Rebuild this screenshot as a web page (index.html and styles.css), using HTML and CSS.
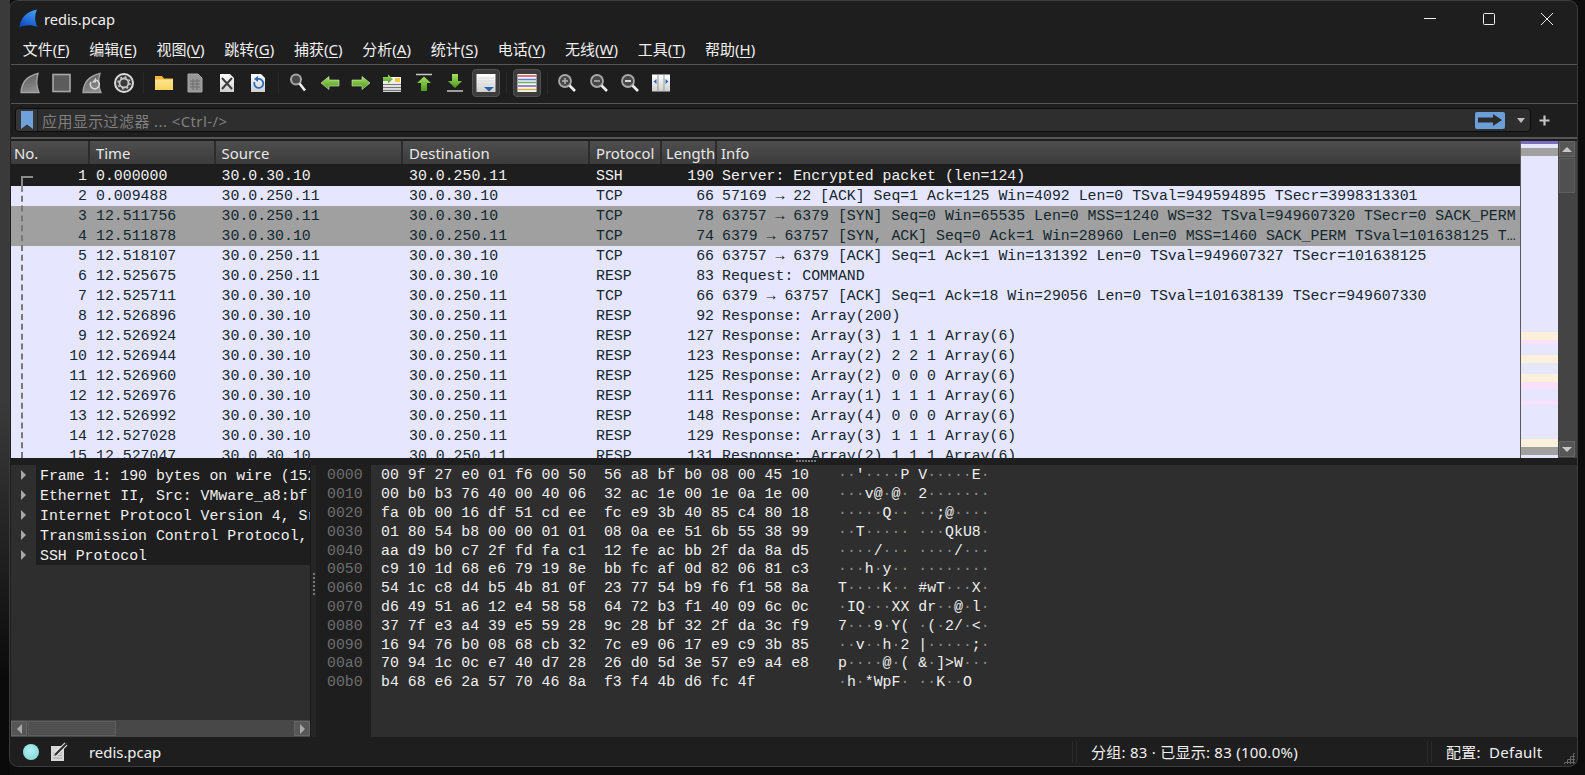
FILE: index.html
```html
<!DOCTYPE html>
<html lang="zh">
<head>
<meta charset="utf-8">
<title>redis.pcap</title>
<link rel="stylesheet" href="styles.css">
</head>
<body>
<svg class="defs" width="0" height="0" aria-hidden="true">
  <defs>
    <linearGradient id="fin" x1="0" y1="0" x2="0.3" y2="1"><stop offset="0" stop-color="#5a5a5a"/><stop offset="1" stop-color="#8a8a8a"/></linearGradient>
    <linearGradient id="blue" x1="0.7" y1="0" x2="0.2" y2="1"><stop offset="0" stop-color="#3f9df2"/><stop offset="1" stop-color="#0c46c6"/></linearGradient>
    <linearGradient id="green" x1="0" y1="0" x2="0" y2="1"><stop offset="0" stop-color="#a3e060"/><stop offset="1" stop-color="#4e9a1c"/></linearGradient>
    <linearGradient id="page" x1="0" y1="0" x2="0" y2="1"><stop offset="0" stop-color="#fff"/><stop offset="1" stop-color="#cfcfcf"/></linearGradient>
    <linearGradient id="folder" x1="0" y1="0" x2="0" y2="1"><stop offset="0" stop-color="#ffe48e"/><stop offset="1" stop-color="#fbd25c"/></linearGradient>
  </defs>
</svg>
<div class="window">
  <header class="titlebar">
    <svg class="logo" width="19" height="19" viewBox="0 0 19 19"><path d="M0.500 18.500C1 10 7 2.500 18 0.500C15.500 6 15.500 12.500 18.500 18C12 15.500 6 16 0.500 18.500Z" fill="url(#blue)"/></svg>
    <span class="title">redis.pcap</span>
    <div class="winctl">
      <svg width="58" height="34" viewBox="0 0 58 34"><path d="M23 17.500H35" stroke="#eee" fill="none"/></svg>
      <svg width="58" height="34" viewBox="0 0 58 34"><rect x="23.500" y="12.500" width="11" height="11" rx="1" stroke="#eee" fill="none"/></svg>
      <svg width="58" height="34" viewBox="0 0 58 34"><path d="M23 12L35 24M35 12L23 24" stroke="#eee" fill="none"/></svg>
    </div>
  </header>

  <nav class="menubar">
    <span class="menu">文件(<u>F</u>)</span>
    <span class="menu">编辑(<u>E</u>)</span>
    <span class="menu">视图(<u>V</u>)</span>
    <span class="menu">跳转(<u>G</u>)</span>
    <span class="menu">捕获(<u>C</u>)</span>
    <span class="menu">分析(<u>A</u>)</span>
    <span class="menu">统计(<u>S</u>)</span>
    <span class="menu">电话(<u>Y</u>)</span>
    <span class="menu">无线(<u>W</u>)</span>
    <span class="menu">工具(<u>T</u>)</span>
    <span class="menu">帮助(<u>H</u>)</span>
  </nav>

  <div class="toolbar">
    <span class="tool"><svg width="22" height="22" viewBox="0 0 22 22"><path d="M2 20.500C2.500 11 8 4 19 1.500C17 8 17.200 14 20 20.500Z" fill="url(#fin)" stroke="#a5a5a5" stroke-width="1.300"/></svg></span>
    <span class="tool"><svg width="22" height="22" viewBox="0 0 22 22"><rect x="3" y="2.500" width="17" height="17" fill="#5c5c5c" stroke="#a8a8a8" stroke-width="1.600"/></svg></span>
    <span class="tool"><svg width="22" height="22" viewBox="0 0 22 22"><path d="M2 20.500C2.500 11 8 4 19 1.500C17 8 17.200 14 20 20.500Z" fill="url(#fin)" stroke="#a5a5a5" stroke-width="1.300"/><path d="M10 10A4.500 4.500 0 1 0 15 8" fill="none" stroke="#d5d5d5" stroke-width="1.600"/><path d="M15 5.500V10.500H11Z" fill="#d5d5d5"/></svg></span>
    <span class="tool"><svg width="22" height="22" viewBox="0 0 22 22"><circle cx="11" cy="11" r="9" fill="#3a3a3a" stroke="#dcdcdc" stroke-width="2"/><circle cx="11" cy="11" r="4.500" fill="#3a3a3a" stroke="#c8c8c8" stroke-width="1.800"/><circle cx="11" cy="11" r="6" fill="none" stroke="#c8c8c8" stroke-width="1.500" stroke-dasharray="2 2.700"/></svg></span>
    <i class="sep"></i>
    <span class="tool"><svg width="20" height="20" viewBox="0 0 20 20"><path d="M1 3H8L10 5.500H19V17H1Z" fill="#f3b53a"/><rect x="1" y="6.500" width="18" height="10.500" fill="url(#folder)"/></svg></span>
    <span class="tool"><svg width="20" height="20" viewBox="0 0 20 20"><path d="M3 1H13L17 5V19H3Z" fill="#969696" stroke="#a8a8a8"/><path d="M5 8H15M5 11H15M5 14H15M8 6V17M12 6V17" stroke="#6e6e6e"/></svg></span>
    <span class="tool"><svg width="20" height="20" viewBox="0 0 20 20"><path d="M3 1H13L17 5V19H3Z" fill="url(#page)"/><path d="M5 5L15 16M15 5L5 16" stroke="#3c3c3c" stroke-width="2"/></svg></span>
    <span class="tool"><svg width="20" height="20" viewBox="0 0 20 20"><path d="M3 1H13L17 5V19H3Z" fill="url(#page)"/><path d="M6.500 9A4.500 4.500 0 1 0 10 6" fill="none" stroke="#2f6bb8" stroke-width="1.800"/><path d="M10 3V9L6 6Z" fill="#2f6bb8"/></svg></span>
    <i class="sep"></i>
    <span class="tool"><svg width="20" height="20" viewBox="0 0 20 20"><circle cx="8" cy="6.500" r="5" fill="#484848" stroke="#a8a8a8" stroke-width="2"/><path d="M11.500 10.500L17 17.500" stroke="#eee" stroke-width="2.600"/></svg></span>
    <span class="tool"><svg width="20" height="20" viewBox="0 0 20 20"><path d="M1 10L9 3.500V7H19V13H9V16.500Z" fill="url(#green)" stroke="#d9e8c8" stroke-width="0.600"/></svg></span>
    <span class="tool"><svg width="20" height="20" viewBox="0 0 20 20"><path d="M19 10L11 3.500V7H1V13H11V16.500Z" fill="url(#green)" stroke="#d9e8c8" stroke-width="0.600"/></svg></span>
    <span class="tool"><svg width="20" height="20" viewBox="0 0 20 20"><rect x="1" y="4" width="18" height="15" fill="url(#page)"/><path d="M1 11.500H19M1 14.500H19M1 17.500H19" stroke="#777"/><rect x="13" y="5" width="5" height="4" fill="#f0c94a"/><path d="M11 6L6 1.500V4H1V8H6V10.500Z" fill="url(#green)"/></svg></span>
    <span class="tool"><svg width="20" height="20" viewBox="0 0 20 20"><path d="M2 1.500H18" stroke="#c8c8c8" stroke-width="1.600"/><path d="M10 3.500L17 10H13V18H7V10H3Z" fill="url(#green)"/></svg></span>
    <span class="tool"><svg width="20" height="20" viewBox="0 0 20 20"><path d="M7 1H13V8H17L10 15L3 8H7Z" fill="url(#green)"/><path d="M2 18H18" stroke="#c8c8c8" stroke-width="1.600"/></svg></span>
    <span class="tool"><span class="toggled"><svg width="20" height="20" viewBox="0 0 20 20"><rect x="0.500" y="1" width="19" height="18" fill="url(#page)"/><path d="M2 5H18M2 8H18M2 11H18" stroke="#dadada"/><path d="M8 14H18L13 18.500Z" fill="#2a62aa"/></svg></span></span>
    <i class="sep"></i>
    <span class="tool"><span class="toggled"><svg width="20" height="20" viewBox="0 0 20 20"><rect x="0.500" y="1" width="19" height="18" fill="#f4f4f4"/><path d="M1 3H19" stroke="#d84a4a" stroke-width="1.300"/><path d="M1 6.500H19" stroke="#5a7fd0" stroke-width="1.300"/><path d="M1 9.500H19" stroke="#63b563" stroke-width="1.300"/><path d="M1 13H19" stroke="#7a5fb8" stroke-width="1.300"/><path d="M1 16.500H19" stroke="#d8b63a" stroke-width="1.300"/></svg></span></span>
    <i class="sep"></i>
    <span class="tool"><svg width="20" height="20" viewBox="0 0 20 20"><circle cx="8" cy="8" r="6" fill="#484848" stroke="#a8a8a8" stroke-width="1.800"/><path d="M5 8H11M8 5V11" stroke="#b5b5b5" stroke-width="1.500"/><path d="M12.500 12.500L18 18" stroke="#eee" stroke-width="2.600"/></svg></span>
    <span class="tool"><svg width="20" height="20" viewBox="0 0 20 20"><circle cx="8" cy="8" r="6" fill="#484848" stroke="#a8a8a8" stroke-width="1.800"/><path d="M5 8H11" stroke="#b5b5b5" stroke-width="1.500"/><path d="M12.500 12.500L18 18" stroke="#eee" stroke-width="2.600"/></svg></span>
    <span class="tool"><svg width="20" height="20" viewBox="0 0 20 20"><circle cx="8" cy="8" r="6" fill="#484848" stroke="#a8a8a8" stroke-width="1.800"/><path d="M5 8H11" stroke="#d5d5d5" stroke-width="2.200"/><path d="M12.500 12.500L18 18" stroke="#eee" stroke-width="2.600"/></svg></span>
    <span class="tool"><svg width="20" height="20" viewBox="0 0 20 20"><rect x="1" y="1.500" width="18" height="17" fill="url(#page)"/><path d="M7 1.500V18.500M13 1.500V18.500" stroke="#999"/><path d="M5.500 6V11L2.500 8.500ZM14.500 6V11L17.500 8.500Z" fill="#2f6bb8"/></svg></span>
  </div>

  <div class="filterbar">
    <div class="filterbox">
      <span class="bookmark"><svg width="12" height="18" viewBox="0 0 12 18"><path d="M0 0H12V18L6 13.500L0 18Z" fill="#6fa2dc"/></svg></span>
      <span class="placeholder">应用显示过滤器 ... &lt;Ctrl-/&gt;</span>
      <span class="apply"><svg width="24" height="12" viewBox="0 0 24 12"><path d="M0 3.500H15V0L24 6L15 12V8.500H0Z" fill="#2c2c2c"/></svg></span>
      <span class="dropdown"></span>
    </div>
    <span class="plus"><svg width="11" height="11" viewBox="0 0 11 11"><path d="M5.500 0.500V10.500M0.500 5.500H10.500" stroke="#c4c4c4" stroke-width="2.200"/></svg></span>
  </div>

  <section class="packets">
    <div class="list">
      <div class="head">
        <span class="hc c-no">No.</span>
        <span class="hc c-time">Time</span>
        <span class="hc c-src">Source</span>
        <span class="hc c-dst">Destination</span>
        <span class="hc c-proto">Protocol</span>
        <span class="hc c-len">Length</span>
        <span class="hc c-info">Info</span>
      </div>
      <div class="rows">
        <i class="conv"></i>
        <div class="row sel"><span class="c-no">1</span><span class="c-time">0.000000</span><span class="c-src">30.0.30.10</span><span class="c-dst">30.0.250.11</span><span class="c-proto">SSH</span><span class="c-len">190</span><span class="c-info">Server: Encrypted packet (len=124)</span></div>
        <div class="row"><span class="c-no">2</span><span class="c-time">0.009488</span><span class="c-src">30.0.250.11</span><span class="c-dst">30.0.30.10</span><span class="c-proto">TCP</span><span class="c-len">66</span><span class="c-info">57169 → 22 [ACK] Seq=1 Ack=125 Win=4092 Len=0 TSval=949594895 TSecr=3998313301</span></div>
        <div class="row syn"><span class="c-no">3</span><span class="c-time">12.511756</span><span class="c-src">30.0.250.11</span><span class="c-dst">30.0.30.10</span><span class="c-proto">TCP</span><span class="c-len">78</span><span class="c-info">63757 → 6379 [SYN] Seq=0 Win=65535 Len=0 MSS=1240 WS=32 TSval=949607320 TSecr=0 SACK_PERM</span></div>
        <div class="row syn"><span class="c-no">4</span><span class="c-time">12.511878</span><span class="c-src">30.0.30.10</span><span class="c-dst">30.0.250.11</span><span class="c-proto">TCP</span><span class="c-len">74</span><span class="c-info">6379 → 63757 [SYN, ACK] Seq=0 Ack=1 Win=28960 Len=0 MSS=1460 SACK_PERM TSval=101638125 T…</span></div>
        <div class="row"><span class="c-no">5</span><span class="c-time">12.518107</span><span class="c-src">30.0.250.11</span><span class="c-dst">30.0.30.10</span><span class="c-proto">TCP</span><span class="c-len">66</span><span class="c-info">63757 → 6379 [ACK] Seq=1 Ack=1 Win=131392 Len=0 TSval=949607327 TSecr=101638125</span></div>
        <div class="row"><span class="c-no">6</span><span class="c-time">12.525675</span><span class="c-src">30.0.250.11</span><span class="c-dst">30.0.30.10</span><span class="c-proto">RESP</span><span class="c-len">83</span><span class="c-info">Request: COMMAND</span></div>
        <div class="row"><span class="c-no">7</span><span class="c-time">12.525711</span><span class="c-src">30.0.30.10</span><span class="c-dst">30.0.250.11</span><span class="c-proto">TCP</span><span class="c-len">66</span><span class="c-info">6379 → 63757 [ACK] Seq=1 Ack=18 Win=29056 Len=0 TSval=101638139 TSecr=949607330</span></div>
        <div class="row"><span class="c-no">8</span><span class="c-time">12.526896</span><span class="c-src">30.0.30.10</span><span class="c-dst">30.0.250.11</span><span class="c-proto">RESP</span><span class="c-len">92</span><span class="c-info">Response: Array(200)</span></div>
        <div class="row"><span class="c-no">9</span><span class="c-time">12.526924</span><span class="c-src">30.0.30.10</span><span class="c-dst">30.0.250.11</span><span class="c-proto">RESP</span><span class="c-len">127</span><span class="c-info">Response: Array(3) 1 1 1 Array(6)</span></div>
        <div class="row"><span class="c-no">10</span><span class="c-time">12.526944</span><span class="c-src">30.0.30.10</span><span class="c-dst">30.0.250.11</span><span class="c-proto">RESP</span><span class="c-len">123</span><span class="c-info">Response: Array(2) 2 2 1 Array(6)</span></div>
        <div class="row"><span class="c-no">11</span><span class="c-time">12.526960</span><span class="c-src">30.0.30.10</span><span class="c-dst">30.0.250.11</span><span class="c-proto">RESP</span><span class="c-len">125</span><span class="c-info">Response: Array(2) 0 0 0 Array(6)</span></div>
        <div class="row"><span class="c-no">12</span><span class="c-time">12.526976</span><span class="c-src">30.0.30.10</span><span class="c-dst">30.0.250.11</span><span class="c-proto">RESP</span><span class="c-len">111</span><span class="c-info">Response: Array(1) 1 1 1 Array(6)</span></div>
        <div class="row"><span class="c-no">13</span><span class="c-time">12.526992</span><span class="c-src">30.0.30.10</span><span class="c-dst">30.0.250.11</span><span class="c-proto">RESP</span><span class="c-len">148</span><span class="c-info">Response: Array(4) 0 0 0 Array(6)</span></div>
        <div class="row"><span class="c-no">14</span><span class="c-time">12.527028</span><span class="c-src">30.0.30.10</span><span class="c-dst">30.0.250.11</span><span class="c-proto">RESP</span><span class="c-len">129</span><span class="c-info">Response: Array(3) 1 1 1 Array(6)</span></div>
        <div class="row"><span class="c-no">15</span><span class="c-time">12.527047</span><span class="c-src">30.0.30.10</span><span class="c-dst">30.0.250.11</span><span class="c-proto">RESP</span><span class="c-len">131</span><span class="c-info">Response: Array(2) 1 1 1 Array(6)</span></div>
      </div>
    </div>
    <div class="minimap"></div>
    <div class="vscroll">
      <span class="sbtn"><i class="tri-up"></i></span>
      <span class="vthumb"></span>
      <span class="vtrack"></span>
      <span class="sbtn"><i class="tri-down"></i></span>
    </div>
  </section>

  <div class="hsplit"><i class="grip-h"></i></div>

  <section class="panes">
    <div class="tree">
      <div class="tree-rows">
        <div class="tr"><span class="arrow"><i class="tri-right"></i></span><span class="tt">Frame 1: 190 bytes on wire (152</span></div>
        <div class="tr"><span class="arrow"><i class="tri-right"></i></span><span class="tt">Ethernet II, Src: VMware_a8:bf:</span></div>
        <div class="tr"><span class="arrow"><i class="tri-right"></i></span><span class="tt">Internet Protocol Version 4, Src</span></div>
        <div class="tr"><span class="arrow"><i class="tri-right"></i></span><span class="tt">Transmission Control Protocol, S</span></div>
        <div class="tr"><span class="arrow"><i class="tri-right"></i></span><span class="tt">SSH Protocol</span></div>
      </div>
      <div class="hscroll">
        <span class="sbtn-h"><i class="tri-left"></i></span>
        <span class="hthumb"></span>
        <span class="htrack"></span>
        <span class="sbtn-h"><i class="tri-right"></i></span>
      </div>
    </div>
    <div class="vsplit"><i class="grip-v"></i></div>
    <pre class="offsets">0000
0010
0020
0030
0040
0050
0060
0070
0080
0090
00a0
00b0</pre>
    <pre class="hex">00 9f 27 e0 01 f6 00 50  56 a8 bf b0 08 00 45 10
00 b0 b3 76 40 00 40 06  32 ac 1e 00 1e 0a 1e 00
fa 0b 00 16 df 51 cd ee  fc e9 3b 40 85 c4 80 18
01 80 54 b8 00 00 01 01  08 0a ee 51 6b 55 38 99
aa d9 b0 c7 2f fd fa c1  12 fe ac bb 2f da 8a d5
c9 10 1d 68 e6 79 19 8e  bb fc af 0d 82 06 81 c3
54 1c c8 d4 b5 4b 81 0f  23 77 54 b9 f6 f1 58 8a
d6 49 51 a6 12 e4 58 58  64 72 b3 f1 40 09 6c 0c
37 7f e3 a4 39 e5 59 28  9c 28 bf 32 2f da 3c f9
16 94 76 b0 08 68 cb 32  7c e9 06 17 e9 c9 3b 85
70 94 1c 0c e7 40 d7 28  26 d0 5d 3e 57 e9 a4 e8
b4 68 e6 2a 57 70 46 8a  f3 f4 4b d6 fc 4f</pre>
    <pre class="ascii"><b>··</b>'<b>····</b>P V<b>·····</b>E<b>·</b>
<b>···</b>v@<b>·</b>@<b>·</b> 2<b>·······</b>
<b>·····</b>Q<b>··</b> <b>··</b>;@<b>····</b>
<b>··</b>T<b>·····</b> <b>···</b>QkU8<b>·</b>
<b>····</b>/<b>···</b> <b>····</b>/<b>···</b>
<b>···</b>h<b>·</b>y<b>··</b> <b>········</b>
T<b>····</b>K<b>··</b> #wT<b>···</b>X<b>·</b>
<b>·</b>IQ<b>···</b>XX dr<b>··</b>@<b>·</b>l<b>·</b>
7<b>···</b>9<b>·</b>Y( <b>·</b>(<b>·</b>2/<b>·</b>&lt;<b>·</b>
<b>··</b>v<b>··</b>h<b>·</b>2 |<b>·····</b>;<b>·</b>
p<b>····</b>@<b>·</b>( &amp;<b>·</b>]&gt;W<b>···</b>
<b>·</b>h<b>·</b>*WpF<b>·</b> <b>··</b>K<b>··</b>O</pre>
  </section>

  <footer class="status">
    <span class="led"></span>
    <svg class="note" width="19" height="19" viewBox="0 0 19 19"><path d="M1 4H14V19H1Z" fill="#d8d8d8"/><path d="M3 11H12M3 13.500H12M3 16H12" stroke="#a5a5a5"/><path d="M5 13L16 2" stroke="#f4f4f4" stroke-width="4"/><path d="M5 13L17 1" stroke="#333" stroke-width="2.400"/></svg>
    <span class="file">redis.pcap</span>
    <span class="spring"></span>
    <i class="ssep"></i>
    <span class="counts">分组: 83 · 已显示: 83 (100.0%)</span>
    <i class="ssep"></i>
    <span class="profile">配置:&nbsp; Default</span>
    <span class="sizegrip"></span>
  </footer>
</div>
</body>
</html>
```
FILE: styles.css
```css
* { box-sizing: border-box; }
html, body { margin: 0; height: 100%; overflow: hidden; }
body {
  padding: 1px 8px 9px 10px;
  background: linear-gradient(#3a3a3a, #3a3a3a 400px, #0a0a0a 680px) left top / 10px 100% no-repeat, #0d0d0d;
  font-family: "Noto Sans", "Noto Sans CJK SC", sans-serif;
  font-size: 14.9px;
  color: #f0f0f0;
}
.defs { position: absolute; }
.window {
  width: 1567px;
  height: 765px;
  display: flex;
  flex-direction: column;
  padding-left: 1px;
  background: #1e1e1e;
  border-radius: 8px;
  box-shadow: 0 0 0 1px #3c3c3c;
  overflow: hidden;
}

/* title */
.titlebar { height: 34px; flex: none; display: flex; align-items: center; padding: 2px 0 0 8px; }
.logo { margin: -2px 6px 0 0; }
.title { font-size: 14.67px; }
.winctl { margin: -2px 0 0 auto; display: flex; padding-right: 1px; gap: 0.5px; }

/* menu */
.menubar { height: 30px; flex: none; display: flex; align-items: center; padding: 0 0 2px 1.8px; border-bottom: 1px solid #555; }
.menu { padding: 0 9.9px; white-space: nowrap; font-size: 15px; }
.menu u { text-underline-offset: 2px; }

/* toolbar */
.toolbar { height: 39px; flex: none; display: flex; align-items: center; padding: 0 0 2px 3px; border-bottom: 1px solid #555; }
.tool { width: 31.35px; height: 28px; flex: none; display: flex; align-items: center; justify-content: center; }
.toggled { width: 28px; height: 28px; display: flex; align-items: center; justify-content: center; background: #3c3c3c; border: 1px solid #505050; border-radius: 4px; }
.sep { width: 1px; margin: 0 4px; height: 22px; background: #282828; flex: none; }

/* filter */
.filterbar { height: 35px; flex: none; display: flex; align-items: flex-start; padding: 4px 0 0 4px; border-bottom: 2px solid #555; }
.filterbox { width: 1516px; height: 24px; display: flex; align-items: center; background: #2e2e2e; border: 1px solid #0c0c0c; border-radius: 4px; }
.bookmark { width: 22px; height: 100%; flex: none; display: flex; align-items: center; justify-content: center; background: #363636; border-right: 1px solid #1a1a1a; border-radius: 3px 0 0 3px; }
.placeholder { margin-left: 4px; color: #7f7f7f; white-space: nowrap; font-size: 15px; letter-spacing: 0.4px; }
.apply { margin-left: auto; width: 30px; height: 17px; flex: none; display: flex; align-items: center; justify-content: center; background: #6b9fd8; border-radius: 2px; }
.dropdown { width: 0; height: 0; margin: 0 5px 0 12px; border-style: solid; border-width: 5px 4px 0; border-color: #bdbdbd transparent transparent; flex: none; }
.plus { margin: 7px 0 0 8px; display: flex; }

/* packets */
.packets { height: 317px; margin-top: 2px; flex: none; display: flex; }
.list { width: 1510px; flex: none; display: flex; flex-direction: column; border-right: 1px solid #5a5a5a; min-height: 0; overflow: hidden; }
.head { height: 23px; flex: none; margin-bottom: 2px; display: flex; background: linear-gradient(#4e4e4e, #3c3c3c); color: #e8e8e8; line-height: 24px; }
.hc { border-right: 2px solid #2c2c2c; white-space: nowrap; overflow: hidden; }
.head .c-no { text-align: left; padding: 0 0 0 3px; }
.head .c-len { text-align: left; padding: 0 0 0 4px; }
.head .c-info { border-right: 0; padding-left: 4px; }
.rows { position: relative; flex: 1; min-height: 0; background: #e7e6ff; overflow: hidden; }
.row {
  height: 20px;
  display: flex;
  background: #e7e6ff;
  color: #12272e;
  font-family: "Liberation Mono", monospace;
  font-size: 14.87px;
  line-height: 20px;
  white-space: pre;
}
.row.sel { background: #1e1e1e; color: #f2f2f2; }
.row.syn { background: #a0a0a0; }
.c-no { width: 79px; flex: none; text-align: right; padding-right: 3px; }
.c-time { width: 126px; flex: none; padding-left: 6px; }
.c-src { width: 187px; flex: none; padding-left: 5.6px; }
.c-dst { width: 187px; flex: none; padding-left: 6px; }
.c-proto { width: 72px; flex: none; padding-left: 6px; }
.c-len { width: 55px; flex: none; text-align: right; padding-right: 3px; }
.c-info { flex: 1; min-width: 0; padding-left: 5px; overflow: hidden; }
.conv { position: absolute; left: 10px; top: 10px; bottom: 0; width: 10px; border-left: 2px dashed #777; z-index: 1; }
.conv::before { content: ""; position: absolute; left: -2px; top: 0; width: 10px; height: 12px; border-left: 2px solid #8a8a8a; border-top: 2px solid #8a8a8a; }
.minimap {
  width: 37px;
  flex: none;
  background: linear-gradient(#7a6cc0 0 3px, #e7e6ff 3px 7px, #a0a0a0 7px 15px, #e7e6ff 15px 191px, #faf0dc 191px 199px, #fbe0fb 199px 203px, #e7e6ff 203px 214px, #faf0dc 214px 222px, #e7e6ff 222px 233px, #faf0dc 233px 241px, #fbe0fb 241px 248px, #e7e6ff 248px 260px, #fbe0fb 260px 264px, #e7e6ff 264px 298px, #faf0dc 298px 306px, #a0a0a0 306px 314px, #e7e6ff 314px);
}
.vscroll { width: 19px; flex: none; display: flex; flex-direction: column; padding: 0 2px 1px 1px; background: #444; }
.sbtn { height: 16px; flex: none; display: flex; align-items: center; justify-content: center; background: #565656; border: 1px solid #666; }
.vthumb { height: 35px; margin-top: 1px; flex: none; background: #505050; border: 1px solid #5e5e5e; }
.vtrack { flex: 1; }
.tri-up, .tri-down, .tri-left, .tri-right { display: block; width: 0; height: 0; border-style: solid; }
.tri-up { border-width: 0 5px 5px; border-color: transparent transparent #c8c8c8; }
.tri-down { border-width: 5px 5px 0; border-color: #c8c8c8 transparent transparent; }
.tri-right { border-width: 5px 0 5px 5px; border-color: transparent transparent transparent #a8a8a8; }
.tri-left { border-width: 5px 5px 5px 0; border-color: transparent #a8a8a8 transparent transparent; }

.hsplit { height: 7px; flex: none; display: flex; justify-content: center; background: #1e1e1e; padding-top: 2px; }
.grip-h { width: 21px; height: 2px; margin-left: 24px; background: repeating-linear-gradient(90deg, #777 0 2px, transparent 2px 3px); }

/* panes */
.panes { height: 272px; flex: none; display: flex; background: #2e2e2e; }
.tree { width: 299px; flex: none; display: flex; flex-direction: column; overflow: hidden; }
.tree-rows { flex: 1; min-height: 0; }
.tr { height: 20px; display: flex; font-family: "Liberation Mono", monospace; font-size: 14.87px; line-height: 20px; white-space: pre; }
.arrow { width: 25px; flex: none; display: flex; align-items: center; justify-content: center; }
.tt { flex: 1; min-width: 0; padding: 1px 0 0 4px; background: #1e1e1e; overflow: hidden; color: #f0f0f0; }
.hscroll { height: 17px; flex: none; display: flex; background: #484848; padding: 1px 0; }
.sbtn-h { width: 16px; flex: none; display: flex; align-items: center; justify-content: center; background: #565656; border: 1px solid #666; }
.hthumb { width: 88px; margin-left: 1px; flex: none; background: #505050; border: 1px solid #5e5e5e; }
.htrack { flex: 1; }
.vsplit { width: 6px; flex: none; display: flex; align-items: center; justify-content: flex-end; background: #252525; border-left: 1px solid #1a1a1a; }
.grip-v { width: 2px; height: 24px; margin: 0 1px 0 0; transform: translateY(-16px); background: repeating-linear-gradient(#777 0 2px, transparent 2px 4px); }
pre { margin: 0; font-family: "Liberation Mono", monospace; font-size: 14.87px; line-height: 18.8px; padding-top: 1.4px; }
.offsets { width: 55px; flex: none; padding-left: 11px; background: #1e1e1e; color: #6e6e6e; }
.hex { width: 467px; flex: none; padding-left: 10px; color: #f0f0f0; }
.ascii { flex: 1; color: #f0f0f0; }
.ascii b { font-weight: 400; color: #8a8a8a; }

/* status */
.status { height: 29px; flex: none; display: flex; align-items: center; padding-left: 12px; position: relative; }
.led { width: 16px; height: 16px; flex: none; border-radius: 50%; background: radial-gradient(circle at 45% 40%, #b5f0f0, #76d0d4); }
.note { margin-left: 11px; flex: none; }
.file { margin-left: 20px; }
.spring { flex: 1; }
.ssep { width: 5px; height: 22px; flex: none; border-left: 1px solid #2a2a2a; border-right: 1px solid #2a2a2a; }
.counts { width: 350px; padding-left: 14px; white-space: nowrap; font-size: 15px; letter-spacing: 0.25px; }
.profile { width: 145px; padding-left: 14px; white-space: nowrap; font-size: 15px; letter-spacing: 0.25px; }
.sizegrip { position: absolute; right: 2px; bottom: 2px; width: 12px; height: 12px; background: radial-gradient(circle, #666 1px, transparent 1.2px) 0 0 / 3px 3px; clip-path: polygon(100% 0, 100% 100%, 0 100%); }
```
